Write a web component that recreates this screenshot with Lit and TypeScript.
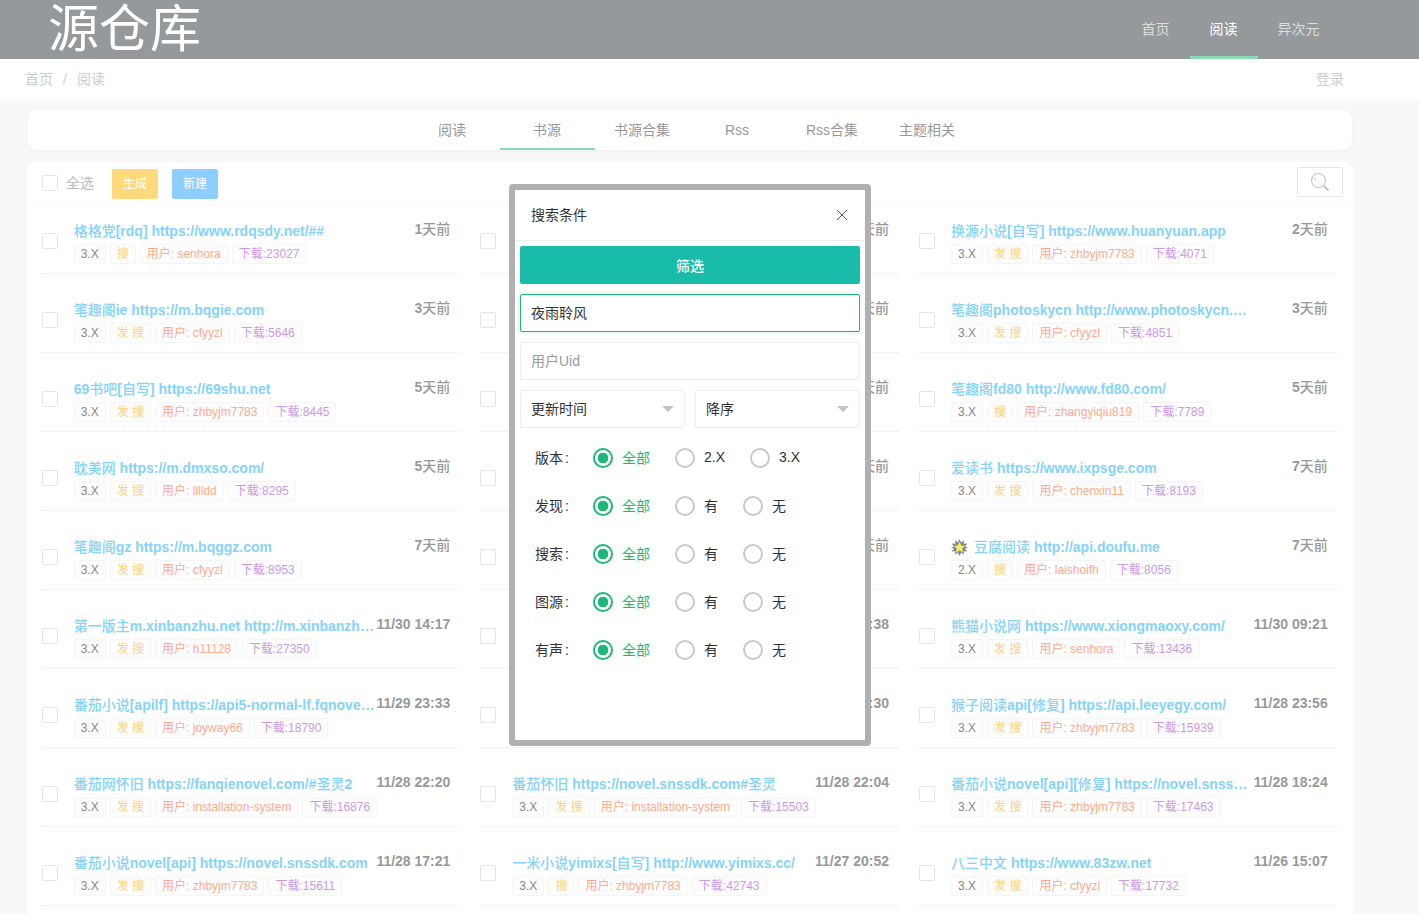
import { LitElement, css, html, nothing } from 'lit';
import { customElement } from 'lit/decorators.js';

type Source = {
  title?: string;
  time: string;
  ver?: string;
  flag?: string;
  user?: string;
  dl?: string;
  star?: boolean;
};

const row = (title: string, time: string, flag: string, user: string, dl: string, ver = '3.X'): Source => ({
  title, time, flag, user, dl, ver,
});

const columns: Source[][] = [
  [
    row('格格党[rdq] https://www.rdqsdy.net/##', '1天前', '搜', 'senhora', '23027'),
    row('笔趣阁ie https://m.bqgie.com', '3天前', '发 搜', 'cfyyzl', '5646'),
    row('69书吧[自写] https://69shu.net', '5天前', '发 搜', 'zhbyjm7783', '8445'),
    row('耽美网 https://m.dmxso.com/', '5天前', '发 搜', 'lllldd', '8295'),
    row('笔趣阁gz https://m.bqggz.com', '7天前', '发 搜', 'cfyyzl', '8953'),
    row('第一版主m.xinbanzhu.net http://m.xinbanzhu.net/', '11/30 14:17', '发 搜', 'h11128', '27350'),
    row('番茄小说[apilf] https://api5-normal-lf.fqnovel.com', '11/29 23:33', '发 搜', 'joyway66', '18790'),
    row('番茄网怀旧 https://fanqienovel.com/#圣灵2', '11/28 22:20', '发 搜', 'installation-system', '16876'),
    row('番茄小说novel[api] https://novel.snssdk.com', '11/28 17:21', '发 搜', 'zhbyjm7783', '15611'),
  ],
  [
    // these rows sit behind the dialog, only the end of the time shows
    { time: '1天前' },
    { time: '3天前' },
    { time: '5天前' },
    { time: '5天前' },
    { time: '7天前' },
    { time: '11/30 11:38' },
    { time: '11/29 22:30' },
    row('番茄怀旧 https://novel.snssdk.com#圣灵', '11/28 22:04', '发 搜', 'installation-system', '15503'),
    row('一米小说yimixs[自写] http://www.yimixs.cc/', '11/27 20:52', '搜', 'zhbyjm7783', '42743'),
  ],
  [
    row('换源小说[自写] https://www.huanyuan.app', '2天前', '发 搜', 'zhbyjm7783', '4071'),
    row('笔趣阁photoskycn http://www.photoskycn.com/', '3天前', '发 搜', 'cfyyzl', '4851'),
    row('笔趣阁fd80 http://www.fd80.com/', '5天前', '搜', 'zhangyiqiu819', '7789'),
    row('爱读书 https://www.ixpsge.com', '7天前', '发 搜', 'chenxin11', '8193'),
    { ...row('豆腐阅读 http://api.doufu.me', '7天前', '搜', 'laishoifh', '8056', '2.X'), star: true },
    row('熊猫小说网 https://www.xiongmaoxy.com/', '11/30 09:21', '发 搜', 'senhora', '13436'),
    row('猴子阅读api[修复] https://api.leeyegy.com/', '11/28 23:56', '发 搜', 'zhbyjm7783', '15939'),
    row('番茄小说novel[api][修复] https://novel.snssdk.com', '11/28 18:24', '发 搜', 'zhbyjm7783', '17463'),
    row('八三中文 https://www.83zw.net', '11/26 15:07', '发 搜', 'cfyyzl', '17732'),
  ],
];

const tabs = ['阅读', '书源', '书源合集', 'Rss', 'Rss合集', '主题相关'];

const filters = [
  { label: '版本 :', options: ['2.X', '3.X'] },
  { label: '发现 :', options: ['有', '无'] },
  { label: '搜索 :', options: ['有', '无'] },
  { label: '图源 :', options: ['有', '无'] },
  { label: '有声 :', options: ['有', '无'] },
];

@customElement('app-root')
export class AppRoot extends LitElement {
  static styles = css`
    :host {
      display: block;
      position: relative;
      height: 914px;
      overflow: hidden;
      background: #f8f8f8;
      font-family: 'Liberation Sans', 'Noto Sans CJK SC', sans-serif;
      font-size: 14px;
      color: #333;
    }

    .top {
      display: flex;
      justify-content: space-between;
      height: 59px;
      background: #96999b;
      overflow: hidden;
    }

    .logo {
      margin: 0 0 0 48px;
      font-size: 51px;
      line-height: 60px;
      color: #fff;
    }

    .nav {
      display: flex;
      margin-right: 79px;
    }

    .nav span {
      padding: 0 20.5px 0 19.5px;
      line-height: 59px;
      color: #dcdddd;
    }

    .nav span.on {
      color: #fff;
      box-shadow: inset 0 -3px 0 #8cd9b8;
    }

    .crumbs {
      display: flex;
      justify-content: space-between;
      height: 40px;
      padding: 0 75px 0 25px;
      background: #fff;
      line-height: 40px;
      color: #ccc;
    }

    .crumbs i {
      margin: 0 10px;
      font-style: normal;
    }

    .tabs {
      display: flex;
      justify-content: center;
      height: 40px;
      margin: 11px 67px 0 28px;
      padding-right: 1px;
      background: #fff;
      border-radius: 10px;
      box-shadow: 0 2px 4px rgba(0, 0, 0, 0.03);
    }

    .tabs span {
      width: 95px;
      text-align: center;
      line-height: 40px;
      color: #999;
    }

    .tabs span.on {
      box-shadow: inset 0 -2px 0 #8cd9b8;
    }

    .panel {
      margin: 12px 66px 0 27px;
      padding: 0 5.3px 0 4.7px;
      height: 760px;
      background: #fff;
      border-radius: 10px;
    }

    .toolbar {
      display: flex;
      align-items: flex-start;
      height: 42px;
      margin: 0 -5.3px 0 -4.7px;
      padding: 0 10px 0 15px;
      border-bottom: 1px solid #fafafa;
    }

    .check {
      flex: none;
      box-sizing: border-box;
      width: 16px;
      height: 16px;
      background: #fff;
      border: 1px solid #e6e6e6;
      border-radius: 2px;
    }

    .toolbar .check {
      margin-top: 13px;
    }

    .all {
      margin: 11px 18px 0 8px;
      line-height: 20px;
      color: #bbb;
    }

    .btn {
      width: 46px;
      height: 30px;
      margin: 7px 14px 0 0;
      border-radius: 2px;
      line-height: 30px;
      text-align: center;
      font-size: 12px;
      color: #fff;
    }

    .btn.yellow {
      background: #ffd97a;
    }

    .btn.blue {
      background: #8dcdff;
    }

    .find {
      box-sizing: border-box;
      display: flex;
      align-items: center;
      justify-content: center;
      width: 46px;
      height: 30px;
      margin: 5px 0 0 auto;
      border: 1px solid #e6e6e6;
      border-radius: 2px;
    }

    .grid {
      display: grid;
      grid-template-columns: repeat(3, 1fr);
      grid-auto-flow: column;
      grid-template-rows: repeat(9, 69px);
      row-gap: 10px;
    }

    .item {
      display: flex;
      box-sizing: border-box;
      margin: 0 10px;
      padding-top: 16px;
      border-bottom: 1px dotted #e8e8e8;
    }

    .item .check {
      margin: 12px 16px 0 0;
    }

    .body {
      flex: 1;
      min-width: 0;
    }

    .line {
      display: flex;
      justify-content: space-between;
      padding-right: 10px;
    }

    .title {
      display: flex;
      align-items: center;
      width: 302px;
      height: 20px;
      font-weight: 700;
      line-height: 20px;
      color: #85d3fb;
    }

    .title svg {
      flex: none;
      margin-right: 6px;
    }

    .title b {
      overflow: hidden;
      text-overflow: ellipsis;
      white-space: nowrap;
      font-weight: 700;
    }

    .time {
      margin-top: -2px;
      line-height: 20px;
      font-weight: 700;
      white-space: nowrap;
      color: #999;
    }

    .cjk {
      font-weight: 500;
    }

    .tags {
      display: flex;
      gap: 4px;
      margin-top: 3px;
    }

    .tags span {
      height: 18px;
      padding: 0 6px;
      background: #fdfdfd;
      border: 1px solid #f5f5f5;
      border-radius: 2px;
      font-size: 12px;
      line-height: 18px;
      white-space: nowrap;
    }

    .tags .ver {
      color: #888;
    }

    .tags .flag {
      color: #ffd27f;
    }

    .tags .user {
      color: #ffa98f;
    }

    .tags .dl {
      color: #cc99e5;
    }

    .modal {
      position: absolute;
      left: 509px;
      top: 184px;
      box-sizing: border-box;
      width: 362px;
      height: 562px;
      background: #fff;
      border: 6px solid #b0b0b0;
      border-radius: 4px;
    }

    .head {
      display: flex;
      align-items: center;
      justify-content: space-between;
      height: 50px;
      padding: 0 17px 0 16px;
      border-bottom: 1px solid #eee;
    }

    .head span {
      margin-bottom: 2px;
    }

    .form {
      display: flex;
      flex-direction: column;
      gap: 10px;
      padding: 5px 5px 0;
    }

    .go {
      height: 38px;
      background: #19bca9;
      border-radius: 2px;
      line-height: 40px;
      text-align: center;
      font-weight: 500;
      color: #fff;
    }

    .field {
      box-sizing: border-box;
      height: 38px;
      padding: 0 10px;
      border: 1px solid #eee;
      border-radius: 2px;
      line-height: 36px;
      color: #999;
    }

    .field.focus {
      border-color: #1cb877;
      box-shadow: 0 0 0 3px #f0faf6;
      color: #333;
    }

    .selects {
      display: flex;
      gap: 10px;
    }

    .select {
      flex: 1;
      display: flex;
      align-items: center;
      justify-content: space-between;
      color: #333;
    }

    .select i {
      width: 0;
      height: 0;
      border: 6px solid transparent;
      border-top: 6px solid #c2c2c2;
      border-bottom: 0;
    }

    .filters {
      padding-top: 6px;
    }

    .filter {
      display: flex;
      align-items: center;
      height: 48px;
      padding-left: 20px;
    }

    .filter label {
      width: 58px;
      margin-bottom: 3px;
      word-spacing: -2px;
      color: #333;
    }

    .opt {
      display: flex;
      align-items: center;
      gap: 9px;
      min-width: 43px;
      margin-right: 25px;
      color: #333;
    }

    .opt em {
      margin-bottom: 2px;
      font-style: normal;
    }

    .opt.on {
      color: #1cb877;
    }

    .dot {
      flex: none;
      box-sizing: border-box;
      width: 20px;
      height: 20px;
      border: 2px solid #c8c8c8;
      border-radius: 50%;
    }

    .on .dot {
      border-color: #1cb877;
      background: radial-gradient(circle, #1cb877 0, #1cb877 5px, #fff 5.6px);
    }
  `;

  // CJK runs stay lighter than the latin part of a bold line
  private runs(text: string) {
    return text
      .split(/([\u4e00-\u9fff]+)/)
      .map((part, i) => (i % 2 ? html`<span class="cjk">${part}</span>` : part));
  }

  private star() {
    return html`<svg width="17" height="17" viewBox="0 0 17 17">
      <path fill="#7f8a8f" d="M8.5 0l1.6 3.4L13 1.2l-.3 3.6 3.6-.3-2.2 2.9L17 8.5l-2.9 1.1 2.2 2.9-3.6-.3.3 3.6-2.9-2.2L8.5 17l-1.6-3.4L4 15.8l.3-3.6-3.6.3 2.2-2.9L0 8.5l2.9-1.1L.7 4.500l3.6.3L4 1.200l2.900 2.200z" />
      <path fill="#f8e868" d="M8.500 2.800l1.700 3.700 4 .4-3 2.700.9 3.900-3.600-2-3.600 2 .9-3.900-3-2.700 4-.4z" />
    </svg>`;
  }

  private renderItem(s: Source) {
    return html`<div class="item">
      <div class="check"></div>
      <div class="body">
        <div class="line">
          <div class="title">
            ${s.star ? this.star() : nothing}
            ${s.title ? html`<b>${this.runs(s.title)}</b>` : nothing}
          </div>
          <div class="time">${this.runs(s.time)}</div>
        </div>
        ${s.title
          ? html`<div class="tags">
              <span class="ver">${s.ver}</span>
              <span class="flag">${s.flag}</span>
              <span class="user">用户: ${s.user}</span>
              <span class="dl">下载:${s.dl}</span>
            </div>`
          : nothing}
      </div>
    </div>`;
  }

  private renderFilter(f: { label: string; options: string[] }) {
    return html`<div class="filter">
      <label>${f.label}</label>
      <div class="opt on"><span class="dot"></span><em>全部</em></div>
      ${f.options.map((o) => html`<div class="opt"><span class="dot"></span><em>${o}</em></div>`)}
    </div>`;
  }

  render() {
    return html`
      <div class="top">
        <div class="logo">源仓库</div>
        <div class="nav">
          <span>首页</span>
          <span class="on">阅读</span>
          <span>异次元</span>
        </div>
      </div>
      <div class="crumbs">
        <div>首页<i>/</i>阅读</div>
        <div>登录</div>
      </div>
      <div class="tabs">
        ${tabs.map((t, i) => html`<span class=${i === 1 ? 'on' : ''}>${t}</span>`)}
      </div>
      <div class="panel">
        <div class="toolbar">
          <div class="check"></div>
          <div class="all">全选</div>
          <div class="btn yellow">生成</div>
          <div class="btn blue">新建</div>
          <div class="find">
            <svg width="20" height="20" viewBox="0 0 20 20" fill="none" stroke="#c4c8cc">
              <circle cx="8.500" cy="8.500" r="7" stroke-width="1.200" />
              <path d="M4.500 8.500a4 4 0 0 1 2-3.400" stroke-width="1" />
              <path d="M14 14l4.500 4.500" stroke-width="2.200" />
            </svg>
          </div>
        </div>
        <div class="grid">${columns.flat().map((s) => this.renderItem(s))}</div>
      </div>
      <div class="modal">
        <div class="head">
          <span>搜索条件</span>
          <svg width="12" height="12" viewBox="0 0 12 12" stroke="#555" fill="none">
            <path d="M1 1l10 10M11 1L1 11" />
          </svg>
        </div>
        <div class="form">
          <div class="go">筛选</div>
          <div class="field focus">夜雨聆风</div>
          <div class="field">用户Uid</div>
          <div class="selects">
            <div class="field select">更新时间<i></i></div>
            <div class="field select">降序<i></i></div>
          </div>
        </div>
        <div class="filters">${filters.map((f) => this.renderFilter(f))}</div>
      </div>
    `;
  }
}
